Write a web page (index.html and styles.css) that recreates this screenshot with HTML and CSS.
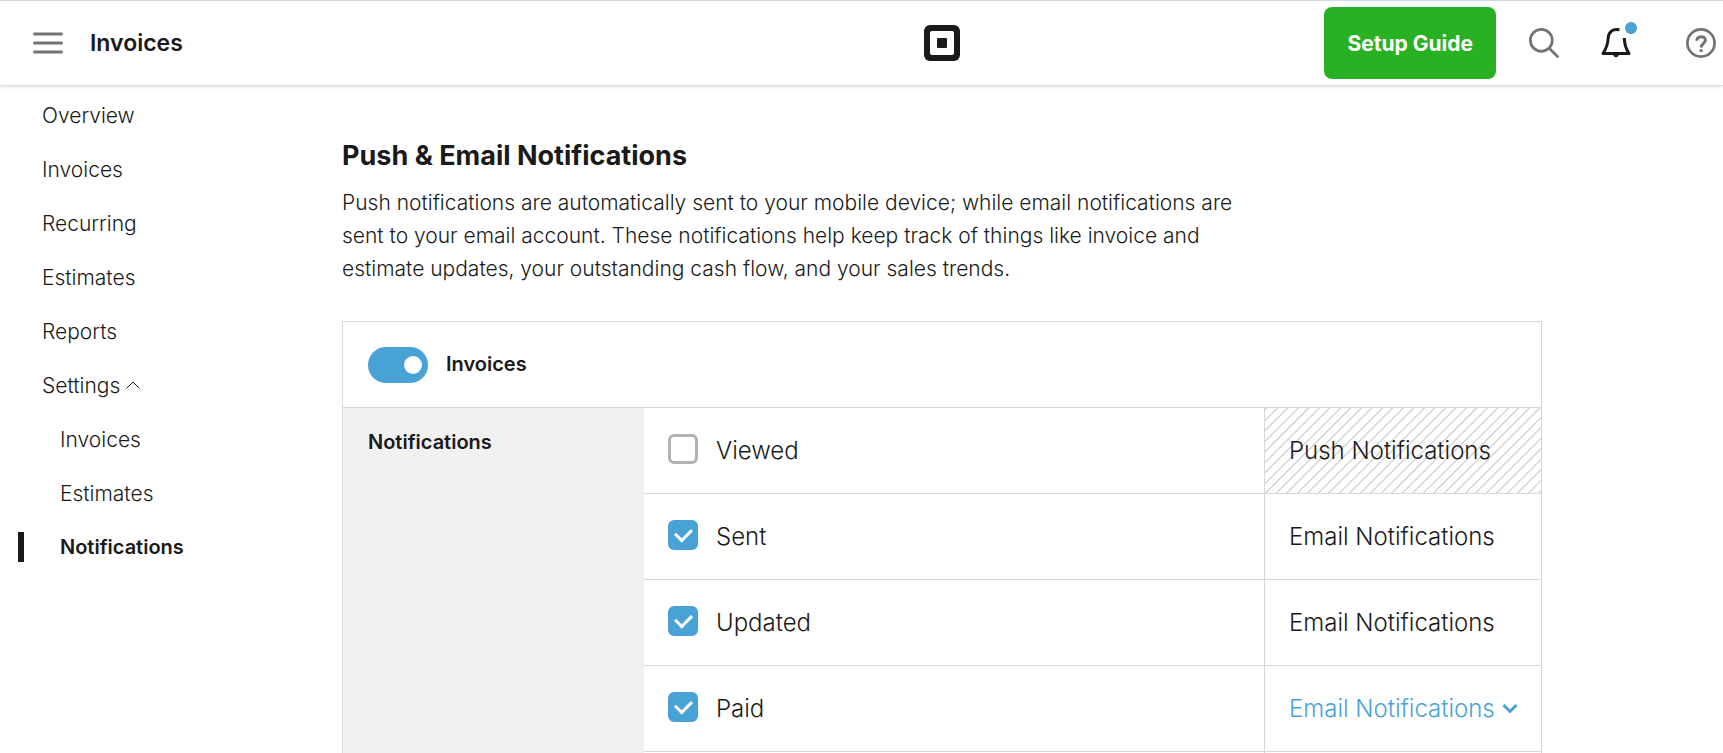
FILE: index.html
```html
<!DOCTYPE html>
<html lang="en">
<head>
<meta charset="utf-8">
<title>Invoices – Notifications</title>
<link rel="stylesheet" href="styles.css">
</head>
<body>
<header class="topbar">
  <div class="topbar-left">
    <button class="icon-button" type="button" aria-label="Menu">
      <svg width="30" height="22" viewBox="0 0 30 22" stroke="#737373" stroke-width="3" stroke-linecap="round"><path d="M1.500 2h27M1.500 11h27M1.500 20h27"/></svg>
    </button>
    <span class="topbar-title">Invoices</span>
  </div>
  <a class="logo" href="#" aria-label="Home">
    <svg width="36" height="36" viewBox="0 0 36 36"><rect width="36" height="36" rx="6" fill="#1a1a1a"/><rect x="6" y="6" width="24" height="24" rx="2" fill="#fff"/><rect x="13" y="13" width="10" height="10" rx="1" fill="#1a1a1a"/></svg>
  </a>
  <div class="topbar-right">
    <button class="setup" type="button">Setup Guide</button>
    <button class="icon-button search" type="button" aria-label="Search">
      <svg width="30" height="30" viewBox="0 0 30 30" fill="none" stroke="#737373" stroke-width="2.7" stroke-linecap="round"><circle cx="12.3" cy="12.3" r="11"/><path d="M20.5 20.5l8 8"/></svg>
    </button>
    <button class="icon-button bell" type="button" aria-label="Alerts">
      <svg width="36" height="36" viewBox="0 0 36 36" fill="none" stroke="#1a1a1a" stroke-width="3"><path d="M18.500 7.800C11 6.300 7.500 10.500 7.200 16 6.900 22.500 5 27 2 31.500h26c-3-4.500-4.500-9-4.700-15.500" stroke-linejoin="round"/><path d="M12.200 32h5.600c0 4.300-5.600 4.300-5.600 0z" fill="#1a1a1a" stroke="none"/><circle cx="30" cy="6" r="6" fill="#49a2d6" stroke="none"/></svg>
    </button>
    <button class="icon-button help" type="button" aria-label="Help">
      <svg width="30" height="30" viewBox="0 0 30 30" fill="none" stroke="#737373" stroke-width="2.7"><circle cx="15" cy="15" r="13.600"/><path stroke-width="3" d="M10.800 12.800c0-5.400 8.600-5.400 8.600-.6 0 3.200-4.200 3.300-4.200 7.200"/><circle cx="15.100" cy="22.600" r="1.700" fill="#737373" stroke="none"/></svg>
    </button>
  </div>
</header>
<div class="layout">
  <nav class="sidebar">
    <a href="#">Overview</a>
    <a href="#">Invoices</a>
    <a href="#">Recurring</a>
    <a href="#">Estimates</a>
    <a href="#">Reports</a>
    <a href="#">Settings <svg width="14" height="8" viewBox="0 0 14 8" fill="none" stroke="#1a1a1a"><path d="M.5 7.500L7 1l6.500 6.500"/></svg></a>
    <a class="sub" href="#">Invoices</a>
    <a class="sub" href="#">Estimates</a>
    <a class="sub active" href="#" aria-current="page">Notifications</a>
  </nav>
  <main class="content">
    <h1>Push &amp; Email Notifications</h1>
    <p>Push notifications are automatically sent to your mobile device; while email notifications are sent to your email account. These notifications help keep track of things like invoice and estimate updates, your outstanding cash flow, and your sales trends.</p>
    <table class="settings">
      <colgroup><col class="col-group"><col><col class="col-channel"></colgroup>
      <thead>
        <tr><th colspan="3" scope="colgroup"><label class="option"><input class="toggle" type="checkbox" checked>Invoices</label></th></tr>
      </thead>
      <tbody>
        <tr>
          <th class="group" rowspan="5" scope="rowgroup">Notifications</th>
          <td><label class="option"><input class="check" type="checkbox">Viewed</label></td>
          <td class="channel hatched">Push Notifications</td>
        </tr>
        <tr>
          <td><label class="option"><input class="check" type="checkbox" checked>Sent</label></td>
          <td class="channel">Email Notifications</td>
        </tr>
        <tr>
          <td><label class="option"><input class="check" type="checkbox" checked>Updated</label></td>
          <td class="channel">Email Notifications</td>
        </tr>
        <tr>
          <td><label class="option"><input class="check" type="checkbox" checked>Paid</label></td>
          <td class="channel"><div class="picker"><select aria-label="Paid notification channel"><option>Email Notifications</option></select><svg width="16" height="12" viewBox="0 0 16 12" fill="none" stroke="#49a2d6" stroke-width="3"><path d="M1.500 2l6.500 6.500L14.500 2"/></svg></div></td>
        </tr>
        <tr><td></td><td class="channel"></td></tr>
      </tbody>
    </table>
  </main>
</div>
</body>
</html>
```
FILE: styles.css
```css
* { box-sizing: border-box; }

body {
  margin: 0;
  height: 100vh;
  overflow: hidden;
  color: #1a1a1a;
  background: #fff;
  font: 300 21px/33px Inter, "Liberation Sans", sans-serif;
}

button, select, input { margin: 0; padding: 0; border: 0; font: inherit; color: inherit; background: none; }
a { color: inherit; text-decoration: none; }
svg { display: block; flex: none; }

.topbar {
  display: grid;
  grid-template-columns: 23fr auto 19fr;
  align-items: center;
  height: 86px;
  border-top: 1px solid #d8d8dc;
  border-bottom: 1px solid #dedede;
  box-shadow: 0 1px 3px rgba(0, 0, 0, .12);
}
.topbar-left { display: flex; align-items: center; gap: 27px; padding-left: 33px; }
.topbar-title { font-size: 23px; font-weight: 600; }
.topbar-right { display: flex; align-items: center; justify-content: flex-end; padding-right: 7px; }
.icon-button { display: block; }
.setup {
  height: 72px;
  padding: 0 23px;
  border-radius: 8px;
  color: #fff;
  background: #28b223;
  font-size: 21px;
  font-weight: 700;
}
.search { margin-left: 33px; }
.bell { margin-left: 42px; padding-bottom: 6px; }
.help { margin-left: 49px; }

.layout { display: grid; grid-template-columns: 342px 1fr; }

.sidebar { display: flex; flex-direction: column; padding-top: 2px; }
.sidebar a { display: flex; align-items: center; gap: 6px; height: 54px; padding-left: 42px; }
.sidebar .sub { padding-left: 60px; }
.sidebar .active { padding-left: 18px; gap: 36px; font-size: 20px; font-weight: 600; }
.sidebar .active::before { content: ""; width: 6px; height: 30px; background: #1a1a1a; }

.content { padding: 54px 181px 0 0; }
h1 { margin: 0 0 14px; font-size: 27px; line-height: 32px; font-weight: 700; }
p { max-width: 900px; margin: 0 0 36px; }

.settings { width: 100%; border-collapse: separate; border-spacing: 0; border: 1px solid #d8d8d8; table-layout: fixed; }
.col-group { width: 301px; }
.col-channel { width: 277px; }
.settings th, .settings td { height: 86px; padding: 0 24px; text-align: left; border-bottom: 1px solid #d8d8d8; }
.settings th { font-size: 20px; font-weight: 600; padding-left: 25px; }
.settings td { font-size: 24px; }
.settings .group { padding-top: 18px; vertical-align: top; background: #f1f1f1; }
.settings .channel { border-left: 1px solid #d8d8d8; }
.settings .hatched {
  background: repeating-linear-gradient(135deg, #d8d8d8 0% 4%, #fff 5% 24%, #d8d8d8 25%) left bottom / 21px 21px;
}

.option { display: flex; align-items: center; gap: 18px; }
.toggle {
  appearance: none;
  width: 60px;
  height: 36px;
  padding: 9px 6px;
  border-radius: 18px;
  background: #49a2d6;
}
.toggle::before { content: ""; display: block; width: 18px; height: 18px; margin-left: auto; border-radius: 50%; background: #fff; }
.toggle:not(:checked)::before { margin-left: 0; }
.check {
  appearance: none;
  display: grid;
  place-items: center;
  width: 30px;
  height: 30px;
  margin-bottom: 4px;
  border: 3px solid #b2b2b2;
  border-radius: 6px;
}
.check:checked { border-color: #49a2d6; background: #49a2d6; }
.check:checked::before {
  content: "";
  width: 8px;
  height: 13px;
  margin-bottom: 4px;
  border: solid #fff;
  border-width: 0 3px 3px 0;
  transform: rotate(45deg);
}
.picker { display: flex; align-items: center; gap: 7px; color: #49a2d6; }
.picker select { appearance: none; }
```
